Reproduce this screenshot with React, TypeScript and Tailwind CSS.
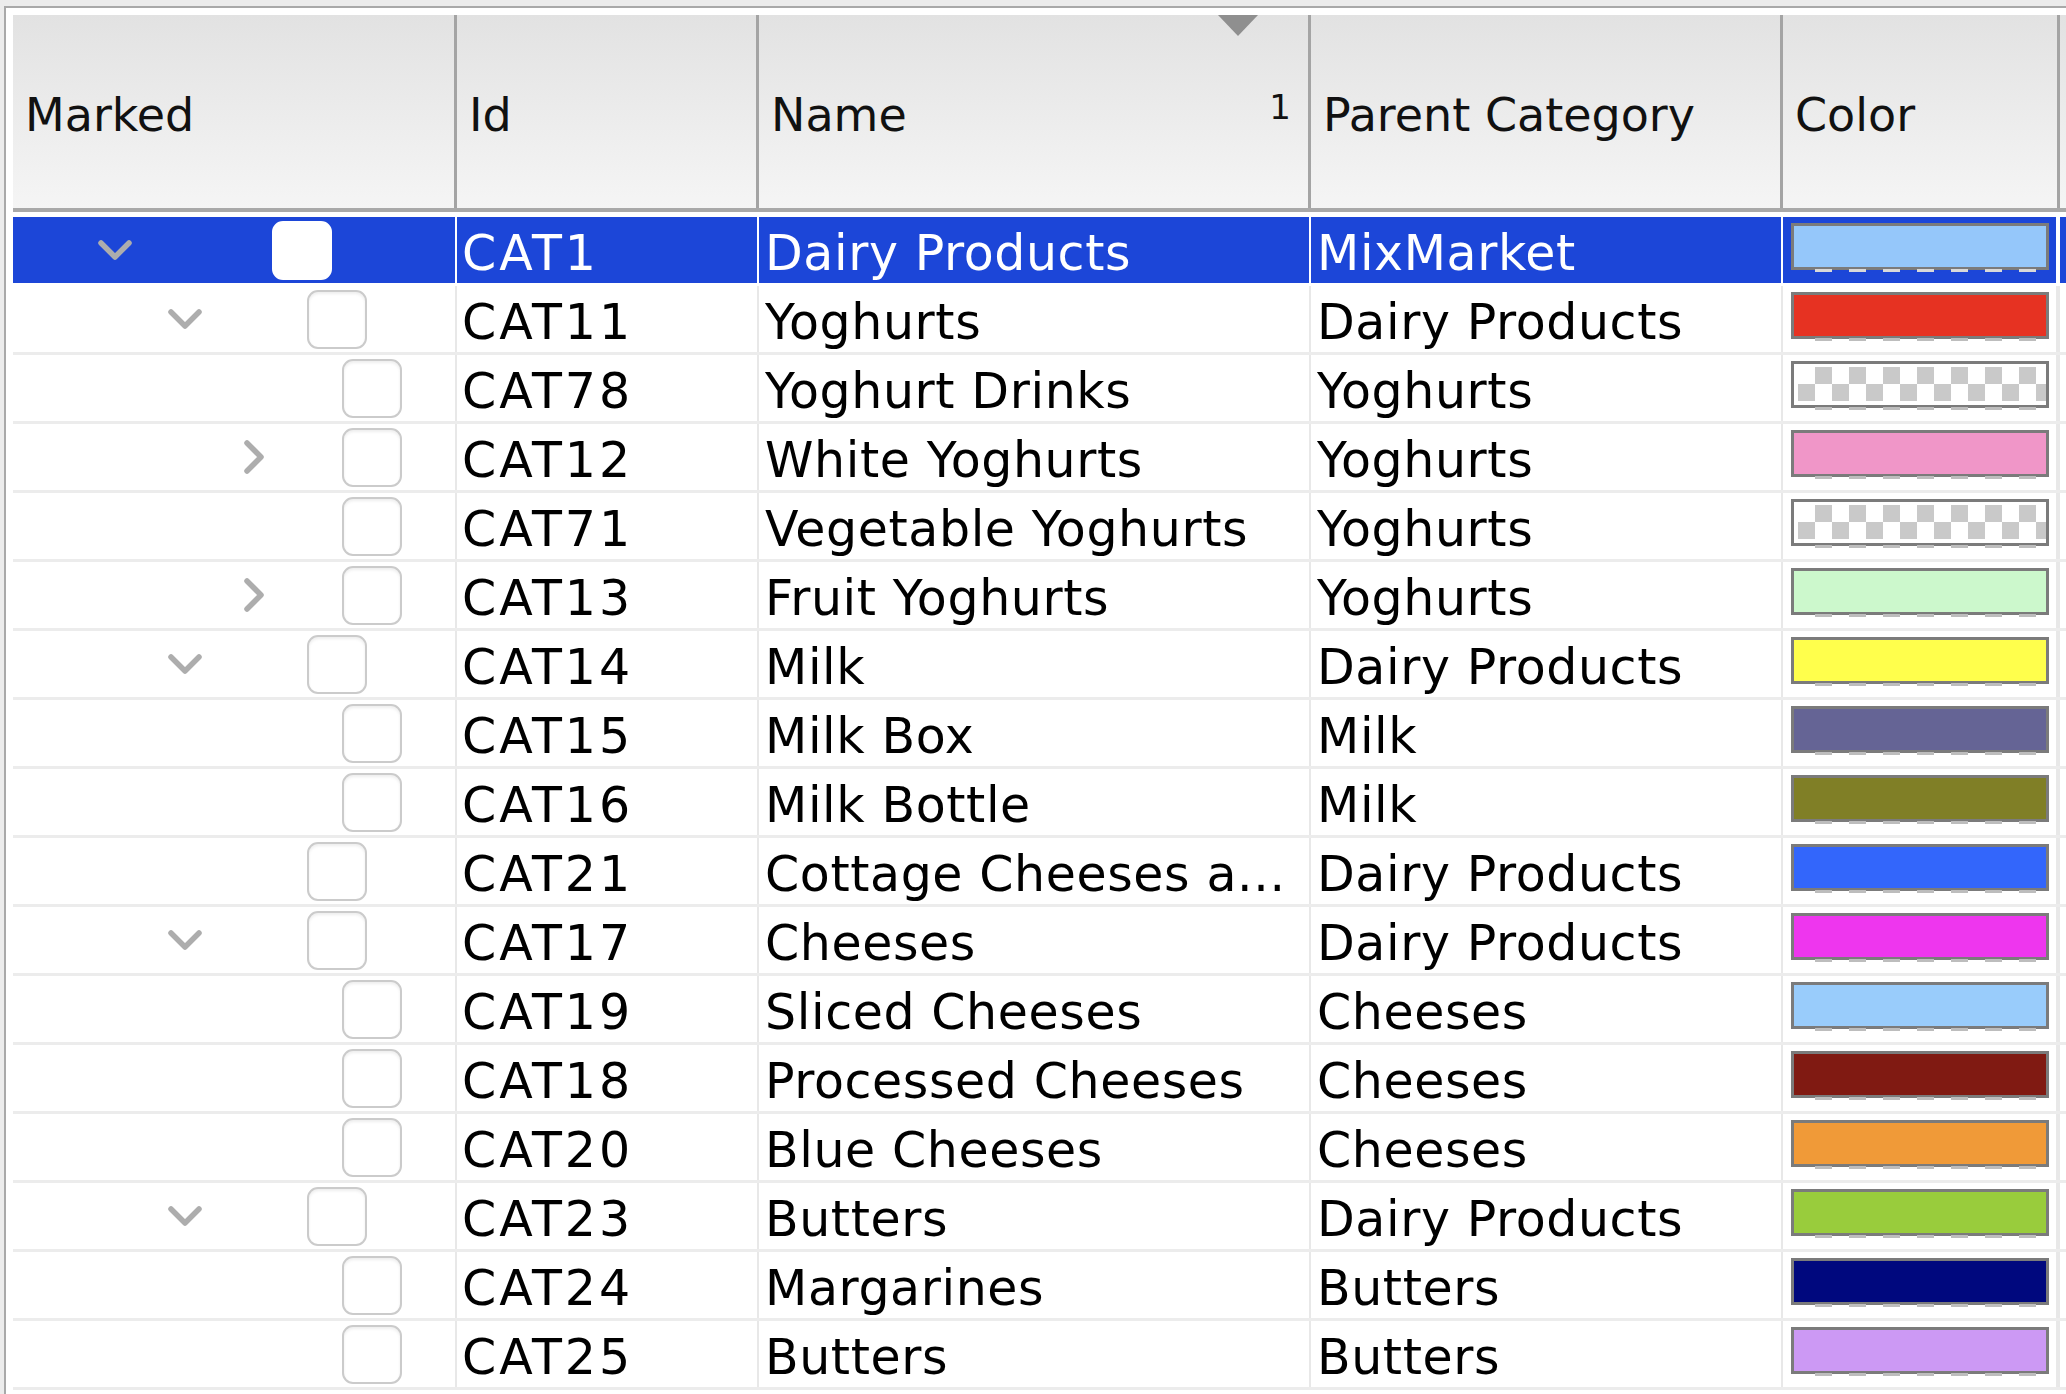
import React from "react";

type Row = {
  id: string;
  name: string;
  parent: string;
  color: string | null; // null = transparent (checker)
  level: number;
  toggle?: "open" | "closed";
};

const rows: Row[] = [
  { id: "CAT1", name: "Dairy Products", parent: "MixMarket", color: "#95c7fa", level: 0, toggle: "open" },
  { id: "CAT11", name: "Yoghurts", parent: "Dairy Products", color: "#e63222", level: 1, toggle: "open" },
  { id: "CAT78", name: "Yoghurt Drinks", parent: "Yoghurts", color: null, level: 2 },
  { id: "CAT12", name: "White Yoghurts", parent: "Yoghurts", color: "#f096c8", level: 2, toggle: "closed" },
  { id: "CAT71", name: "Vegetable Yoghurts", parent: "Yoghurts", color: null, level: 2 },
  { id: "CAT13", name: "Fruit Yoghurts", parent: "Yoghurts", color: "#ccf8cc", level: 2, toggle: "closed" },
  { id: "CAT14", name: "Milk", parent: "Dairy Products", color: "#ffff4c", level: 1, toggle: "open" },
  { id: "CAT15", name: "Milk Box", parent: "Milk", color: "#656495", level: 2 },
  { id: "CAT16", name: "Milk Bottle", parent: "Milk", color: "#807f26", level: 2 },
  { id: "CAT21", name: "Cottage Cheeses a...", parent: "Dairy Products", color: "#3366fb", level: 1 },
  { id: "CAT17", name: "Cheeses", parent: "Dairy Products", color: "#ee36ee", level: 1, toggle: "open" },
  { id: "CAT19", name: "Sliced Cheeses", parent: "Cheeses", color: "#99ccfb", level: 2 },
  { id: "CAT18", name: "Processed Cheeses", parent: "Cheeses", color: "#801a12", level: 2 },
  { id: "CAT20", name: "Blue Cheeses", parent: "Cheeses", color: "#f09a38", level: 2 },
  { id: "CAT23", name: "Butters", parent: "Dairy Products", color: "#99cc3c", level: 1, toggle: "open" },
  { id: "CAT24", name: "Margarines", parent: "Butters", color: "#00087e", level: 2 },
  { id: "CAT25", name: "Butters", parent: "Butters", color: "#cc99f4", level: 2 },
];

const ChevronDown = () => (
  <svg width="36" height="22" viewBox="0 0 36 22" fill="none">
    <path d="M4 4 L18 18 L32 4" stroke="#adadad" strokeWidth="5.5" strokeLinecap="round" strokeLinejoin="round" />
  </svg>
);

const ChevronRight = () => (
  <svg width="22" height="36" viewBox="0 0 22 36" fill="none">
    <path d="M4 4 L18 18 L4 32" stroke="#adadad" strokeWidth="5.5" strokeLinecap="round" strokeLinejoin="round" />
  </svg>
);

const Swatch = ({ color, selected }: { color: string | null; selected: boolean }) => (
  <div className="flex flex-col">
    <div className="w-[258px] h-[47px] border-[3px] border-[#7b7b7b] bg-white" style={color ? { backgroundColor: color } : undefined}>
      {color === null && (
        <div className="ml-[4px] mt-[3px] w-[248px] h-[34px] bg-[conic-gradient(#c9c9c9_25%,#ffffff_0_50%,#c9c9c9_0_75%,#ffffff_0)] bg-size-[34px_34px]" />
      )}
    </div>
    <div
      className={
        "ml-[24px] w-[232px] h-[3px] -mt-[1px] " +
        (selected
          ? "bg-[repeating-linear-gradient(90deg,#d9d9d9_0_17px,transparent_17px_34px)]"
          : "bg-[repeating-linear-gradient(90deg,#bdbdbd_0_17px,transparent_17px_34px)]")
      }
    />
  </div>
);

const TreeRow = ({ row, selected }: { row: Row; selected: boolean }) => {
  // chevron slot (40px wide) and checkbox offsets, taken from the row's tree level
  const chevronLeft = 82 + Math.round(69.5 * row.level);
  const boxLeft = 259 + 35 * row.level;
  const sep = selected ? "border-white" : "border-[#e8e8e8]";
  const text = selected ? "text-white" : "text-black";

  return (
    <div
      className={
        "flex h-[69px] border-b-[3px] " +
        (selected ? "bg-[#1c46d8] border-white" : "bg-white border-[#ececec]")
      }
    >
      <div className={"w-[444px] shrink-0 border-r-2 flex items-center " + sep}>
        <div className="w-10 shrink-0 flex justify-center" style={{ marginLeft: chevronLeft }}>
          {row.toggle === "open" && <ChevronDown />}
          {row.toggle === "closed" && <ChevronRight />}
        </div>
        <div
          className={
            "w-[60px] h-[59px] shrink-0 rounded-[11px] bg-white border-2 " +
            (selected ? "border-white" : "border-[#cbcbcb] shadow-[inset_0_2px_3px_rgba(0,0,0,0.07)]")
          }
          style={{ marginLeft: boxLeft - chevronLeft - 40 }}
        />
      </div>
      <div className={"w-[302px] shrink-0 border-r-2 flex items-center pl-[5px] pt-[6px] tracking-[3px] " + sep + " " + text}>
        {row.id}
      </div>
      <div className={"w-[552px] shrink-0 border-r-2 flex items-center pl-[6px] pt-[6px] tracking-[0.6px] whitespace-nowrap overflow-hidden " + sep + " " + text}>
        {row.name}
      </div>
      <div className={"w-[472px] shrink-0 border-r-2 flex items-center pl-[6px] pt-[6px] tracking-[0.6px] whitespace-nowrap " + sep + " " + text}>
        {row.parent}
      </div>
      <div className={"w-[277px] shrink-0 border-r-[4px] pl-[8px] pt-[6px] " + sep}>
        <Swatch color={row.color} selected={selected} />
      </div>
      <div className="flex-1" />
    </div>
  );
};

const headerCell = "shrink-0 h-full flex items-center pl-[12px] pt-[8px] border-r-[3px] border-[#a4a4a4]";

export default function App() {
  return (
    <div className="w-[2066px] h-[1394px] overflow-hidden bg-[#ececec] pt-[6px] pl-[4px] font-['DejaVu_Sans',sans-serif]">
      <div className="h-full border-l-2 border-t-2 border-[#a9a9a9] bg-white pt-[7px] pl-[7px]">
        {/* header */}
        <div className="flex h-[197px] border-b-[4px] border-[#a9a9a9] bg-gradient-to-b from-[#e2e2e2] to-[#f5f5f5] text-[46px] text-[#111]">
          <div className={headerCell + " w-[444px]"}>Marked</div>
          <div className={headerCell + " w-[302px]"}>Id</div>
          <div className={headerCell + " w-[552px] relative justify-between pr-[17px]"}>
            <span>Name</span>
            <span className="text-[34px] leading-none mb-[18px]">1</span>
            <svg className="absolute left-[459px] top-0" width="40" height="21" viewBox="0 0 40 21">
              <path d="M0 0 H40 L20 21 Z" fill="#8f8f8f" />
            </svg>
          </div>
          <div className={headerCell + " w-[472px]"}>Parent Category</div>
          <div className={headerCell + " w-[277px]"}>Color</div>
          <div className="flex-1" />
        </div>
        {/* body */}
        <div className="pt-[5px] text-[49px] leading-none">
          {rows.map((r, i) => (
            <TreeRow key={r.id} row={r} selected={i === 0} />
          ))}
        </div>
      </div>
    </div>
  );
}
